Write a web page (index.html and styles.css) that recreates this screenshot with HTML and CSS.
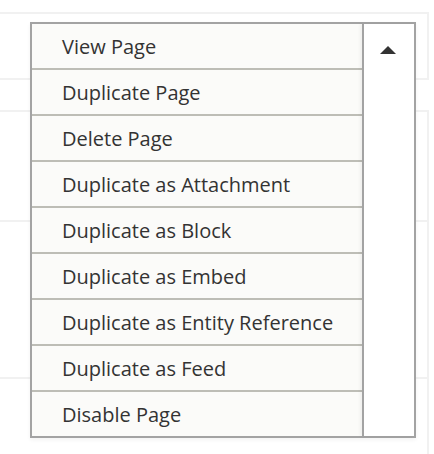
FILE: index.html
```html
<!DOCTYPE html>
<html lang="en">
<head>
<meta charset="utf-8">
<title>Dropbutton</title>
<link rel="stylesheet" href="styles.css">
</head>
<body>
<div class="page">
  <div class="row row-first"></div>
  <div class="row row-second">
    <div class="cell cell-top"></div>
    <div class="cell cell-bottom"></div>
  </div>
  <div class="row row-third"></div>

  <div class="dropbutton">
    <ul class="actions">
      <li class="action">View Page</li>
      <li class="action">Duplicate Page</li>
      <li class="action">Delete Page</li>
      <li class="action">Duplicate as Attachment</li>
      <li class="action">Duplicate as Block</li>
      <li class="action">Duplicate as Embed</li>
      <li class="action">Duplicate as Entity Reference</li>
      <li class="action">Duplicate as Feed</li>
      <li class="action">Disable Page</li>
    </ul>
    <div class="toggle"><span class="arrow"></span></div>
  </div>
</div>
</body>
</html>
```

FILE: styles.css
```css
html, body {
  margin: 0;
  padding: 0;
  background: #ffffff;
  overflow: hidden;
}

.page {
  position: relative;
  width: 434px;
  height: 454px;
  padding-top: 12px;
  box-sizing: border-box;
  overflow: hidden;
  font-family: "Open Sans", "Liberation Sans", sans-serif;
}

.row {
  margin-left: -20px;
  width: 449px;
  box-sizing: border-box;
  border: 2px solid #f1f1f1;
}

.row-first {
  height: 68px;
}

.row-second {
  margin-top: 30px;
  height: 269px;
  display: flex;
  flex-direction: column;
}

.cell-top {
  height: 108px;
  border-bottom: 2px solid #f1f1f1;
}

.cell-bottom {
  flex: 1;
}

.row-third {
  border-top: none;
  border-left: none;
  border-bottom: none;
  height: 75px;
}

.dropbutton {
  position: absolute;
  left: 30px;
  top: 22px;
  width: 386px;
  height: 416px;
  box-sizing: border-box;
  border: 2px solid #a3a3a3;
  display: flex;
  background: #ffffff;
  box-shadow: 0 2px 4px rgba(0, 0, 0, 0.05);
}

.actions {
  list-style: none;
  margin: 0;
  padding: 0;
  width: 330px;
  display: flex;
  flex-direction: column;
  background: #fbfbf9;
}

.action {
  height: 44px;
  box-sizing: border-box;
  padding-top: 2px;
  line-height: 42px;
  padding-left: 30px;
  font-size: 20px;
  color: #333333;
  white-space: nowrap;
}

.action + .action {
  height: 46px;
  border-top: 2px solid #bdbdb6;
}

.toggle {
  width: 50px;
  border-left: 2px solid #a3a3a3;
  background: #ffffff;
  box-shadow: -2px 0 3px rgba(0, 0, 0, 0.05);
  display: flex;
  justify-content: center;
  align-items: flex-start;
  padding-top: 22px;
  box-sizing: content-box;
}

.arrow {
  width: 0;
  height: 0;
  border-left: 8px solid transparent;
  border-right: 8px solid transparent;
  border-bottom: 8px solid #333333;
  margin-right: 2px;
}
```
